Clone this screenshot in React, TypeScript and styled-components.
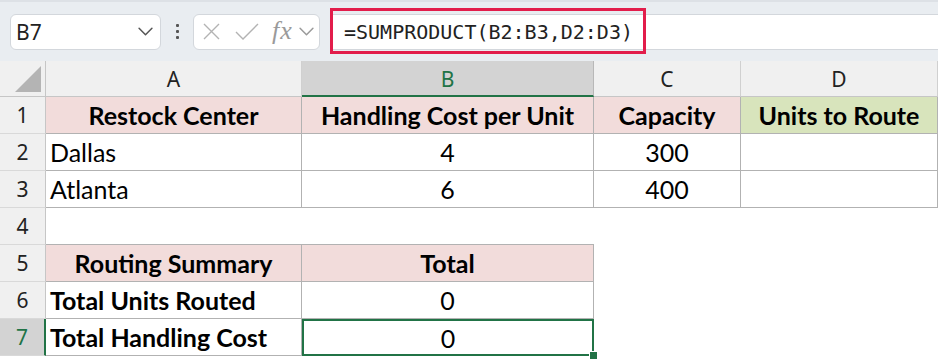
import styled, { createGlobalStyle, css } from "styled-components";

const GlobalStyle = createGlobalStyle`
  body {
    margin: 0;
    background: #fff;
    overflow: hidden;
  }
`;

const Page = styled.div`
  width: 938px;
  height: 360px;
  overflow: hidden;
  display: flex;
  flex-direction: column;
  font-family: "Lato", "Liberation Sans", sans-serif;
`;

const Toolbar = styled.div`
  height: 61px;
  box-sizing: border-box;
  display: flex;
  align-items: center;
  padding-left: 10px;
  background: #e9edf1;
  border-top: 2px solid #dde1e6;
`;

const NameBox = styled.div`
  width: 151px;
  height: 36px;
  box-sizing: border-box;
  display: flex;
  align-items: center;
  justify-content: space-between;
  padding: 0 7px 0 5px;
  background: #fff;
  border: 1px solid #d3d7dc;
  border-radius: 6px;
  font-family: "Noto Sans", "Open Sans", sans-serif;
  font-size: 21px;
  color: #222;
`;

const Dots = styled.div`
  width: 32px;
  display: flex;
  flex-direction: column;
  align-items: center;
  gap: 3px;
  span {
    width: 3px;
    height: 3px;
    background: #555;
    border-radius: 1px;
  }
`;

const FxBox = styled.div`
  width: 127px;
  height: 36px;
  box-sizing: border-box;
  display: flex;
  align-items: center;
  padding-left: 9px;
  background: #fff;
  border: 1px solid #d3d7dc;
  border-radius: 6px;
`;

const Fx = styled.span`
  font-family: "Liberation Serif", serif;
  font-style: italic;
  font-size: 26px;
  line-height: 1;
  color: #9a9a9a;
  margin: 0 6px 2px 13px;
  letter-spacing: 1px;
`;

const FormulaBar = styled.div`
  flex: 1;
  height: 36px;
  margin-left: 11px;
  box-sizing: border-box;
  display: flex;
  align-items: center;
  position: relative;
  background: #fff;
  border-top: 1px solid #d3d7dc;
  border-bottom: 1px solid #d3d7dc;
`;

const Formula = styled.span`
  font-family: "DejaVu Sans Mono", "Liberation Mono", monospace;
  font-size: 20px;
  color: #222;
  padding-left: 13px;
`;

const Highlight = styled.div`
  position: absolute;
  left: -1px;
  top: -7px;
  width: 316px;
  height: 46px;
  box-sizing: border-box;
  border: 3px solid #e21d4b;
`;

const Sheet = styled.div`
  display: grid;
  grid-template-columns: 46px 256px 292px 147px 197px;
  grid-template-rows: 36px repeat(7, 37px);
`;

const Corner = styled.div`
  background: #f0f0f0;
  border-right: 1px solid #c6c6c6;
  border-bottom: 1px solid #c6c6c6;
  box-sizing: border-box;
  position: relative;
  &::after {
    content: "";
    position: absolute;
    right: 4px;
    bottom: 4px;
    width: 26px;
    height: 26px;
    background: #b4b4b4;
    clip-path: polygon(100% 0, 100% 100%, 0 100%);
  }
`;

const ColHead = styled.div<{ $active?: boolean }>`
  display: flex;
  align-items: center;
  justify-content: center;
  box-sizing: border-box;
  font-family: "Noto Sans", "Open Sans", sans-serif;
  font-size: 21px;
  color: #222;
  background: #f0f0f0;
  border-right: 1px solid #d0d0d0;
  border-bottom: 1px solid #c6c6c6;
  ${(p) =>
    p.$active &&
    css`
      background: #d3d3d3;
      color: #217346;
      border-right-color: #b8b8b8;
      border-bottom: 2px solid #217346;
      padding-top: 1px;
    `}
`;

const RowHead = styled.div<{ $active?: boolean }>`
  display: flex;
  align-items: center;
  justify-content: center;
  box-sizing: border-box;
  font-family: "Noto Sans", "Open Sans", sans-serif;
  font-size: 21px;
  color: #222;
  background: #f0f0f0;
  border-right: 1px solid #c6c6c6;
  border-bottom: 1px solid #d9d9d9;
  ${(p) =>
    p.$active &&
    css`
      background: #d3d3d3;
      color: #217346;
      border-right: 2px solid #217346;
    `}
`;

type Align = "left" | "center";

const Cell = styled.div<{
  $bg?: string;
  $bold?: boolean;
  $align?: Align;
  $boxed?: boolean;
  $under?: boolean;
}>`
  display: flex;
  align-items: center;
  justify-content: ${(p) => (p.$align === "center" ? "center" : "flex-start")};
  padding: 0 4px;
  box-sizing: border-box;
  font-size: 25px;
  font-weight: ${(p) => (p.$bold ? 700 : 400)};
  color: #000;
  background: ${(p) => p.$bg || "transparent"};
  white-space: nowrap;
  ${(p) =>
    p.$boxed &&
    css`
      border-right: 1px solid #b2b2b2;
      border-bottom: 1px solid #b2b2b2;
    `}
  ${(p) =>
    p.$under &&
    css`
      border-bottom: 1px solid #b2b2b2;
    `}
`;

const Selected = styled(Cell)`
  position: relative;
  border: none;
  box-shadow: inset 0 0 0 2px #217346;
  &::after {
    content: "";
    position: absolute;
    right: -4px;
    bottom: -4px;
    width: 7px;
    height: 7px;
    background: #217346;
    border: 1px solid #fff;
  }
`;

const Chevron = ({ color = "#555" }: { color?: string }) => (
  <svg width="15" height="9" viewBox="0 0 14 8" fill="none">
    <path d="M1 1l6 6 6-6" stroke={color} strokeWidth="1.4" strokeLinecap="round" strokeLinejoin="round" />
  </svg>
);

const pink = "#f2dcdb";
const green = "#d8e4bc";

export default function App() {
  return (
    <>
      <GlobalStyle />
      <Page>
        <Toolbar>
          <NameBox>
            <span>B7</span>
            <Chevron />
          </NameBox>
          <Dots>
            <span />
            <span />
            <span />
          </Dots>
          <FxBox>
            <svg width="17" height="17" viewBox="0 0 17 17">
              <path d="M1 1l15 15M16 1L1 16" stroke="#b3b3b3" strokeWidth="1.4" />
            </svg>
            <svg width="24" height="17" viewBox="0 0 24 17" style={{ marginLeft: 15 }}>
              <path d="M1 9l7 7L23 1" stroke="#b3b3b3" strokeWidth="1.4" fill="none" />
            </svg>
            <Fx>fx</Fx>
            <Chevron color="#9a9a9a" />
          </FxBox>
          <FormulaBar>
            <Highlight />
            <Formula>=SUMPRODUCT(B2:B3,D2:D3)</Formula>
          </FormulaBar>
        </Toolbar>

        <Sheet>
          <Corner />
          <ColHead>A</ColHead>
          <ColHead $active>B</ColHead>
          <ColHead>C</ColHead>
          <ColHead>D</ColHead>

          <RowHead>1</RowHead>
          <Cell $boxed $bold $align="center" $bg={pink}>Restock Center</Cell>
          <Cell $boxed $bold $align="center" $bg={pink}>Handling Cost per Unit</Cell>
          <Cell $boxed $bold $align="center" $bg={pink}>Capacity</Cell>
          <Cell $boxed $bold $align="center" $bg={green}>Units to Route</Cell>

          <RowHead>2</RowHead>
          <Cell $boxed>Dallas</Cell>
          <Cell $boxed $align="center">4</Cell>
          <Cell $boxed $align="center">300</Cell>
          <Cell $boxed />

          <RowHead>3</RowHead>
          <Cell $boxed>Atlanta</Cell>
          <Cell $boxed $align="center">6</Cell>
          <Cell $boxed $align="center">400</Cell>
          <Cell $boxed />

          <RowHead>4</RowHead>
          <Cell $under />
          <Cell $under />
          <Cell />
          <Cell />

          <RowHead>5</RowHead>
          <Cell $boxed $bold $align="center" $bg={pink}>Routing Summary</Cell>
          <Cell $boxed $bold $align="center" $bg={pink}>Total</Cell>
          <Cell />
          <Cell />

          <RowHead>6</RowHead>
          <Cell $boxed $bold>Total Units Routed</Cell>
          <Cell $boxed $align="center">0</Cell>
          <Cell />
          <Cell />

          <RowHead $active>7</RowHead>
          <Cell $boxed $bold>Total Handling Cost</Cell>
          <Selected $align="center">0</Selected>
          <Cell />
          <Cell />
        </Sheet>
      </Page>
    </>
  );
}
